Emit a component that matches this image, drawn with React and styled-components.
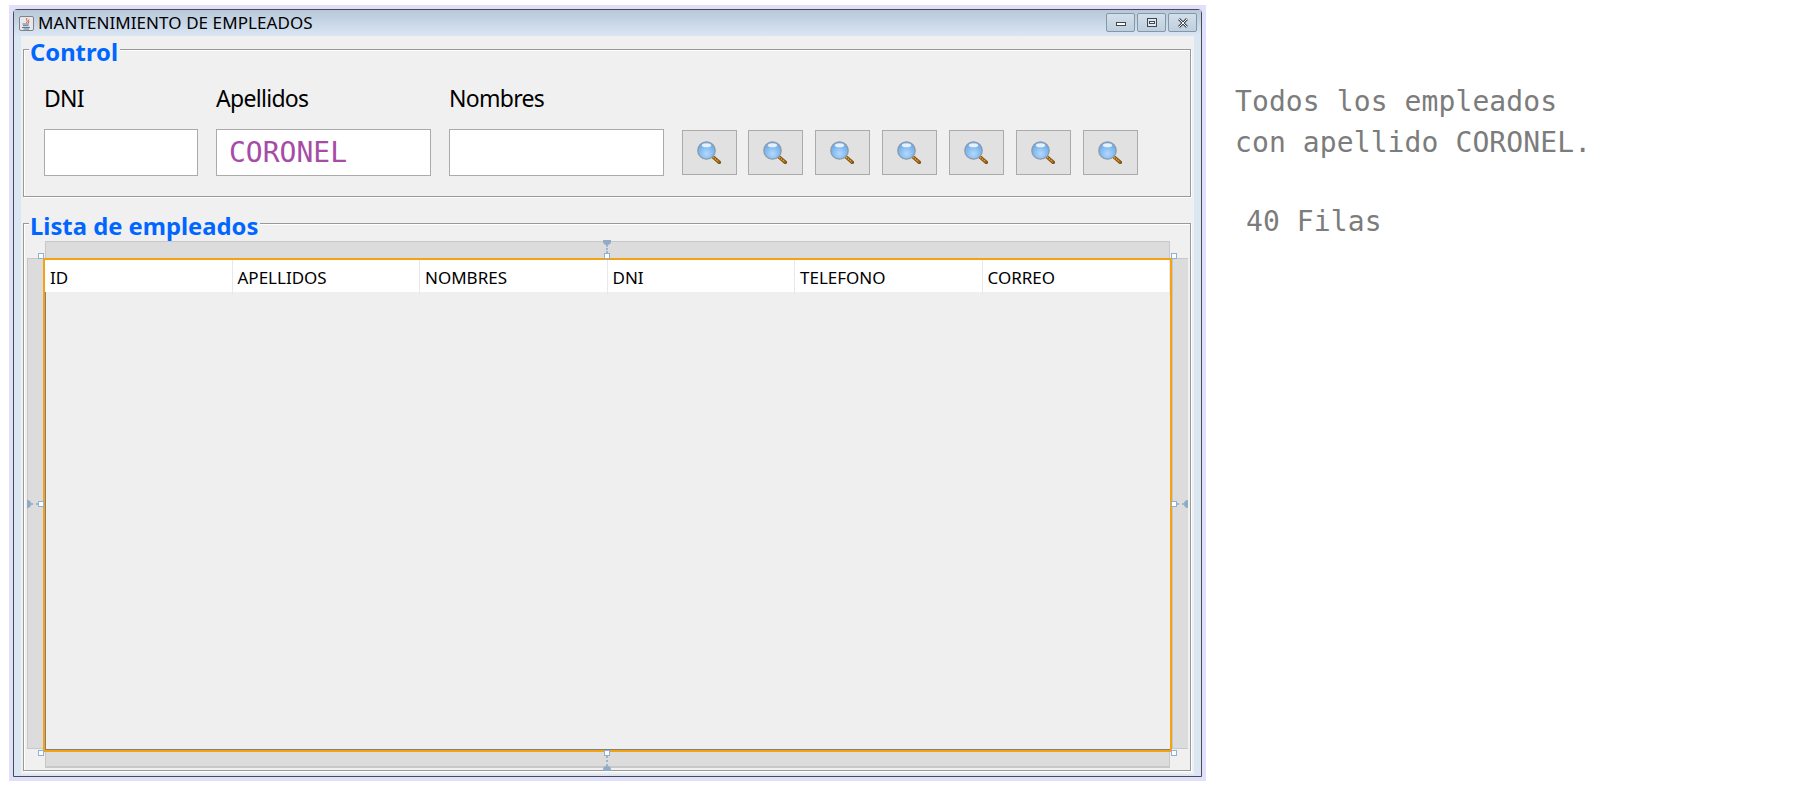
import React from 'react';
import styled, {createGlobalStyle} from 'styled-components';

const GlobalStyle = createGlobalStyle`
    html, body {
        margin: 0;
        padding: 0;
        background: #ffffff;
    }
    body {
        font-family: "Noto Sans", "Liberation Sans", sans-serif;
        color: #000000;
    }
`;

const Page = styled.div`
    display: flex;
    align-items: flex-start;
    width: 1807px;
    height: 789px;
    padding: 5px 0 0 9px;
    box-sizing: border-box;
    overflow: hidden;
`;

const DesignerFrame = styled.div`
    width: 1197px;
    height: 776px;
    padding: 4px;
    box-sizing: border-box;
    background: #e0e0fb;
`;

const Window = styled.div`
    display: flex;
    flex-direction: column;
    height: 100%;
    box-sizing: border-box;
    border: 1px solid #4a4a58;
    border-radius: 4px 4px 0 0;
    background: #dbe6f3;
`;

const TitleBar = styled.div`
    display: flex;
    align-items: center;
    flex: 0 0 26px;
    padding: 0 4px 0 5px;
    background: linear-gradient(#b7c8d9, #dae6f4);
`;

const TitleText = styled.span`
    margin-left: 4px;
    font-size: 17px;
    line-height: 26px;
    letter-spacing: 0.07px;
    color: #000000;
`;

const WindowButtons = styled.div`
    display: flex;
    gap: 2px;
    margin-left: auto;
    margin-bottom: 1px;
`;

const WindowButton = styled.div`
    display: flex;
    align-items: center;
    justify-content: center;
    width: 27px;
    height: 17px;
    border: 1px solid #8497a8;
    border-radius: 2px;
    background: linear-gradient(#d3dfea, #bfcfde);
`;

const Content = styled.div`
    display: flex;
    flex-direction: column;
    flex: 1;
    min-height: 0;
    margin: 0 7px 2px 7px;
    padding: 0 3px 3px 2px;
    background: #f0f0f0;
`;

const Group = styled.fieldset`
    margin: ${props => props.$top || 0}px 0 0 0;
    padding: 0;
    min-width: 0;
    border: 1px solid #999999;
    box-shadow: inset 1px 1px 0 #ffffff, 1px 1px 0 #ffffff;
    ${props => props.$grow && 'flex: 1; min-height: 0;'}
`;

const GroupTitle = styled.legend`
    margin: 0 0 0 5px;
    padding: 5px 2px 0 1px;
    font-size: 23.8px;
    font-weight: 700;
    line-height: 22px;
    color: #0066ff;
    background: #f0f0f0;
`;

const ControlGrid = styled.div`
    display: grid;
    grid-template-columns: 154px 215px 215px auto;
    grid-template-rows: 30px 47px;
    column-gap: 18px;
    row-gap: 16px;
    padding: 20px 0 20px 20px;
`;

const FieldLabel = styled.label`
    grid-row: 1;
    font-size: 23px;
    line-height: 30px;
    letter-spacing: -0.7px;
    color: #000000;
`;

const TextBox = styled.div`
    grid-row: 2;
    box-sizing: border-box;
    padding-left: 12px;
    border: 1px solid #ababab;
    background: #ffffff;
    font-family: "DejaVu Sans Mono", monospace;
    font-size: 28px;
    line-height: 45px;
    color: #a64ca6;
`;

const ButtonRow = styled.div`
    grid-row: 2;
    display: flex;
    gap: 12px;
    padding-top: 1px;
`;

const SearchButton = styled.button`
    display: flex;
    align-items: center;
    justify-content: center;
    width: 55px;
    height: 45px;
    padding: 0 2px 0 0;
    box-sizing: border-box;
    border: 1px solid #ababab;
    background: #e1e1e1;
    &:first-child {
        margin-right: -1px;
    }
`;

const DesignArea = styled.div`
    display: grid;
    grid-template-columns: 16px 1129px 16px;
    grid-template-rows: 17px 494px 16px;
    height: 527px;
    padding: 4px 0 2px 3px;
`;

const HorizontalBar = styled.div`
    grid-column: 2;
    margin: 0 2px;
    box-sizing: border-box;
    border: 1px solid #c8c8c8;
    border-bottom: ${props => props.$bottom ? '2px' : '0'} solid #c8c8c8;
    border-top: 0;
    background: #dcdcdc;
    ${props => !props.$bottom && 'border-top: 1px solid #c8c8c8;'}
`;

const VerticalBar = styled.div`
    box-sizing: border-box;
    height: 491px;
    border: 1px solid #c8c8c8;
    border-right: 0;
    background: #dcdcdc;
`;

const TableFrame = styled.div`
    position: relative;
    box-sizing: border-box;
    border: 2px solid #f3a312;
    box-shadow: inset 0 -1px 0 #808080, inset 1px 0 0 #808080;
    background: #efefef;
`;

const HeaderRow = styled.div`
    display: grid;
    grid-template-columns: repeat(6, 1fr);
    height: 32px;
    background: #ffffff;
`;

const HeaderCell = styled.div`
    padding-left: 5px;
    border-right: 1px solid #e8e8e8;
    font-size: 17px;
    line-height: 35px;
    color: #000000;
`;

const Handle = styled.span`
    position: absolute;
    left: ${props => props.$x}px;
    top: ${props => props.$y}px;
    width: 6px;
    height: 6px;
    box-sizing: border-box;
    border: 1px solid #8fb0cf;
    background: #ffffff;
`;

const Anchor = styled.span`
    position: absolute;
    left: ${props => props.$x}px;
    top: ${props => props.$y}px;
    width: ${props => props.$w}px;
    height: ${props => props.$h}px;
    border-radius: ${props => props.$radius};
    background: #8fabc6;
`;

const Connector = styled.span`
    position: absolute;
    left: ${props => props.$x}px;
    top: ${props => props.$y}px;
    width: ${props => props.$w}px;
    height: ${props => props.$h}px;
    border-top: ${props => props.$w > 2 ? '2px dotted #9db5cc' : '0'};
    border-left: ${props => props.$w > 2 ? '0' : '2px dotted #9db5cc'};
`;

const Note = styled.div`
    margin: 76px 0 0 29px;
    font-family: "DejaVu Sans Mono", monospace;
    font-size: 28px;
    line-height: 41px;
    letter-spacing: 0.1px;
    color: #7c7c7c;
    white-space: pre;
`;

const NoteLine = styled.div`
    ${props => props.$gap && 'margin-top: 38px; padding-left: 11px;'}
`;

const columns = ['ID', 'APELLIDOS', 'NOMBRES', 'DNI', 'TELEFONO', 'CORREO'];
const handles = [
    [-7, -7], [559, -7], [1126, -7],
    [-7, 241], [1126, 241],
    [-7, 490], [559, 490], [1126, 490],
];
const anchors = [
    {x: 558, y: -20, w: 8, h: 5, radius: '0 0 4px 4px'},
    {x: 558, y: 506, w: 8, h: 5, radius: '4px 4px 0 0'},
    {x: -18, y: 240, w: 4, h: 8, radius: '0 4px 4px 0'},
    {x: 1139, y: 240, w: 4, h: 8, radius: '4px 0 0 4px'},
];
const connectors = [
    {x: 561, y: -15, w: 2, h: 8},
    {x: 561, y: 496, w: 2, h: 10},
    {x: -14, y: 243, w: 7, h: 2},
    {x: 1132, y: 243, w: 7, h: 2},
];

function Magnifier({id}) {
    return (
        <svg width="24" height="23" viewBox="0 0 24 23">
            <defs>
                <radialGradient id={id} cx="50%" cy="68%" r="62%">
                    <stop offset="0%" stopColor="#b6d8fa"/>
                    <stop offset="60%" stopColor="#84bcf2"/>
                    <stop offset="100%" stopColor="#6ea6e2"/>
                </radialGradient>
            </defs>
            <line x1="15.5" y1="15.5" x2="22.3" y2="21.3" stroke="#7d5316" strokeWidth="3.6" strokeLinecap="round"/>
            <line x1="16" y1="16" x2="22" y2="21" stroke="#e39a2e" strokeWidth="1.7" strokeDasharray="1.6 0.8"/>
            <circle cx="9.5" cy="9.5" r="8.7" fill={`url(#${id})`} stroke="#8c9ba8" strokeWidth="1.3"/>
            <ellipse cx="9.5" cy="4.2" rx="4.6" ry="2" fill="#e4f2fe"/>
        </svg>
    );
}

function JavaIcon() {
    return (
        <svg width="15" height="15" viewBox="0 0 15 15">
            <rect x="0.5" y="0.5" width="14" height="14" rx="1.5" fill="#e8e8ea" stroke="#7f8288"/>
            <path d="M8 2 C6.5 4 9.5 4.5 7.5 7 M10 3.5 C9 5 10.5 5.5 9.3 7" fill="none" stroke="#d8562a" strokeWidth="1"/>
            <path d="M3.5 8 H10 M4 9.7 H9.5 M3 11.5 H11 M4.5 13 H10" stroke="#4e6c8e" strokeWidth="0.9"/>
        </svg>
    );
}

function WindowGlyph({type}) {
    if (type === 'min') {
        return (
            <svg width="12" height="8" viewBox="0 0 12 8">
                <rect x="1.5" y="3.5" width="9" height="3" fill="#ffffff" stroke="#3f4650"/>
            </svg>
        );
    }
    if (type === 'max') {
        return (
            <svg width="12" height="10" viewBox="0 0 12 10">
                <rect x="1.5" y="0.5" width="9" height="8" fill="#dfe8f1" stroke="#3f4650"/>
                <rect x="3.5" y="3.5" width="5" height="2" fill="#ffffff" stroke="#3f4650"/>
            </svg>
        );
    }
    return (
        <svg width="12" height="10" viewBox="0 0 12 10">
            <path d="M2 1 L10 9 M10 1 L2 9" stroke="#3f4650" strokeWidth="2.6"/>
            <path d="M2 1 L10 9 M10 1 L2 9" stroke="#ffffff" strokeWidth="1"/>
        </svg>
    );
}

export default function App() {
    return (
        <Page>
            <GlobalStyle/>
            <DesignerFrame>
                <Window>
                    <TitleBar>
                        <JavaIcon/>
                        <TitleText>MANTENIMIENTO DE EMPLEADOS</TitleText>
                        <WindowButtons>
                            <WindowButton><WindowGlyph type="min"/></WindowButton>
                            <WindowButton><WindowGlyph type="max"/></WindowButton>
                            <WindowButton><WindowGlyph type="close"/></WindowButton>
                        </WindowButtons>
                    </TitleBar>
                    <Content>
                        <Group>
                            <GroupTitle>Control</GroupTitle>
                            <ControlGrid>
                                <FieldLabel>DNI</FieldLabel>
                                <FieldLabel>Apellidos</FieldLabel>
                                <FieldLabel>Nombres</FieldLabel>
                                <span/>
                                <TextBox/>
                                <TextBox>CORONEL</TextBox>
                                <TextBox/>
                                <ButtonRow>
                                    {[0, 1, 2, 3, 4, 5, 6].map(i => (
                                        <SearchButton key={i}>
                                            <Magnifier id={`lens${i}`}/>
                                        </SearchButton>
                                    ))}
                                </ButtonRow>
                            </ControlGrid>
                        </Group>
                        <Group $top={13} $grow>
                            <GroupTitle>Lista de empleados</GroupTitle>
                            <DesignArea>
                                <span/>
                                <HorizontalBar/>
                                <span/>
                                <VerticalBar/>
                                <TableFrame>
                                    <HeaderRow>
                                        {columns.map(name => (
                                            <HeaderCell key={name}>{name}</HeaderCell>
                                        ))}
                                    </HeaderRow>
                                    {connectors.map(c => (
                                        <Connector key={`${c.x}-${c.y}`} $x={c.x} $y={c.y} $w={c.w} $h={c.h}/>
                                    ))}
                                    {handles.map(([x, y]) => (
                                        <Handle key={`${x}-${y}`} $x={x} $y={y}/>
                                    ))}
                                    {anchors.map(a => (
                                        <Anchor key={`${a.x}-${a.y}`} $x={a.x} $y={a.y} $w={a.w} $h={a.h} $radius={a.radius}/>
                                    ))}
                                </TableFrame>
                                <VerticalBar/>
                                <span/>
                                <HorizontalBar $bottom/>
                            </DesignArea>
                        </Group>
                    </Content>
                </Window>
            </DesignerFrame>
            <Note>
                <NoteLine>Todos los empleados</NoteLine>
                <NoteLine>con apellido CORONEL.</NoteLine>
                <NoteLine $gap>40 Filas</NoteLine>
            </Note>
        </Page>
    );
}
